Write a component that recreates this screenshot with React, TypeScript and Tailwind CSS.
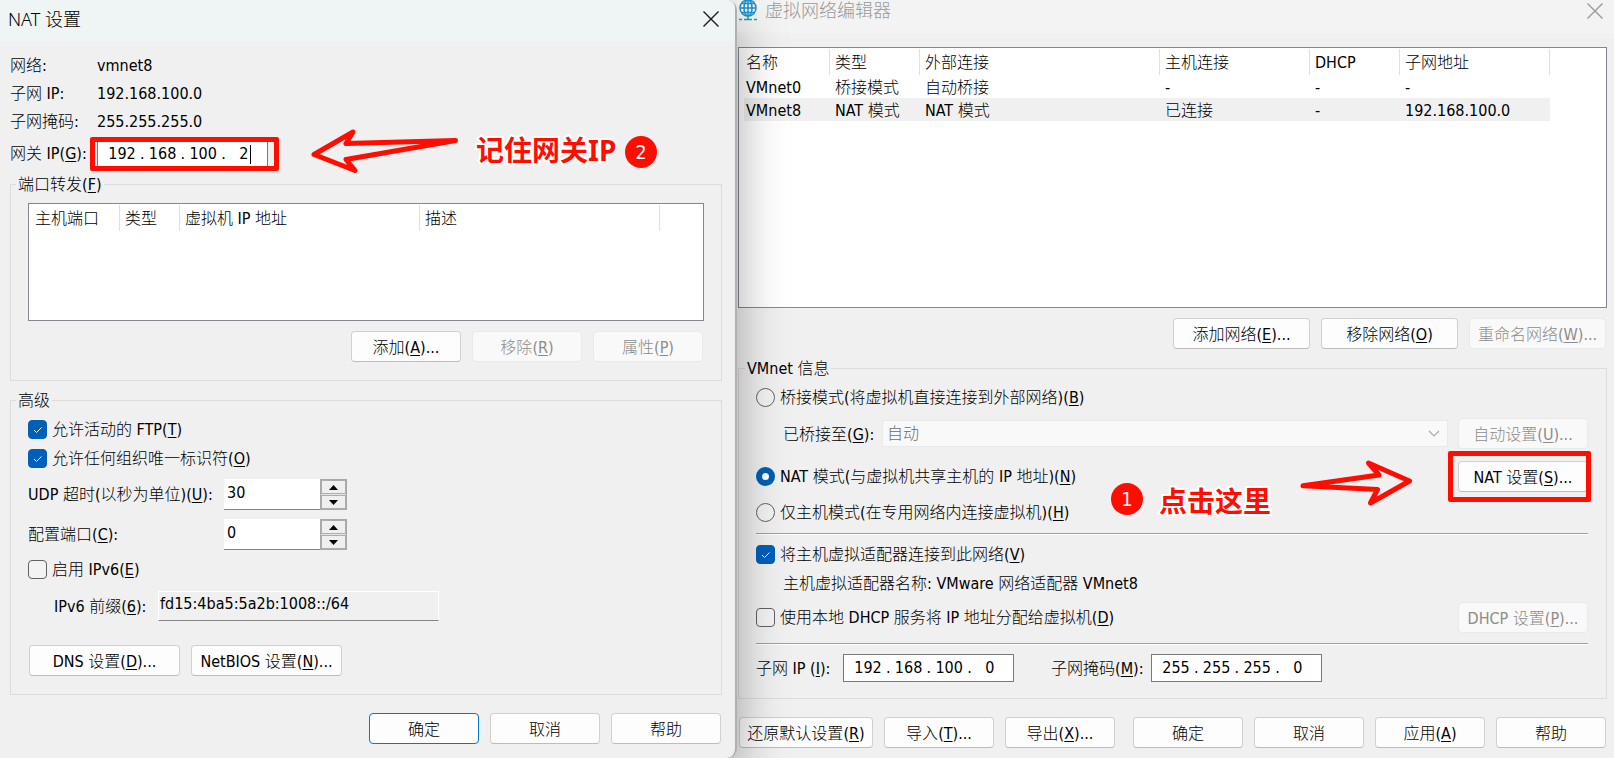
import React, { useState } from 'react';

const botonBase = 'flex h-[31px] shrink-0 items-center justify-center whitespace-nowrap rounded border pt-[2px]';
const botonNormal = 'border-[#d0d0d0] border-b-[#bcbcbc] bg-[#fdfdfd] text-black';
const botonDisabled = 'border-[#e9e9e9] bg-[#f9f9f9] text-[#8c8c8c]';

// Text with its keyboard shortcut: 添加(A)...
const Hotkey = ({ text, k, end = '' }: { text: string; k: string; end?: string }) => (
  <span className="whitespace-nowrap">
    {text}(<u className="underline underline-offset-2">{k}</u>){end}
  </span>
);

const Button = ({
  children,
  width = 'w-[110px]',
  disabled = false,
  primary = false,
}: {
  children: React.ReactNode;
  width?: string;
  disabled?: boolean;
  primary?: boolean;
}) => (
  <button
    type="button"
    disabled={disabled}
    className={`${botonBase} ${width} ${
      disabled ? botonDisabled : primary ? 'border-[#0078d4] bg-[#fdfdfd] text-black' : botonNormal
    }`}
  >
    {children}
  </button>
);

const Check = ({ checked = false, children }: { checked?: boolean; children: React.ReactNode }) => {
  const [on, setOn] = useState(checked);
  return (
    <label className="flex h-[29px] items-center gap-[5px]">
      <span className="relative h-[19px] w-[19px] shrink-0">
        <input
          type="checkbox"
          checked={on}
          onChange={() => setOn(!on)}
          className="block h-[19px] w-[19px] appearance-none rounded border border-[#626262] bg-[#f3f3f3] checked:border-[#005fb8] checked:bg-[#005fb8]"
        />
        {on && (
          <svg className="pointer-events-none absolute inset-0" width="19" height="19" viewBox="0 0 19 19" fill="none">
            <path d="M6 10l2.5 2.5L13.500 7.500" stroke="#fff" strokeWidth="1" />
          </svg>
        )}
      </span>
      <span className="pt-px">{children}</span>
    </label>
  );
};

const Radio = ({
  value,
  mode,
  setMode,
  children,
}: {
  value: string;
  mode: string;
  setMode: (v: string) => void;
  children: React.ReactNode;
}) => (
  <label className="flex h-[29px] items-center gap-[5px]">
    <input
      type="radio"
      name="vmnet"
      value={value}
      checked={mode === value}
      onChange={() => setMode(value)}
      className="h-[19px] w-[19px] shrink-0 appearance-none rounded-full border border-[#626262] bg-[#f3f3f3] checked:border-6 checked:border-[#005fb8] checked:bg-white"
    />
    <span className="pt-px">{children}</span>
  </label>
);

const IpField = ({ label, value, caret = false }: { label: string; value: string[]; caret?: boolean }) => (
  <div role="group" aria-label={label} className="flex h-7 w-[171px] items-center border border-[#7a7a7a] bg-white px-[6px]">
    {value.map((octet, i) => (
      <React.Fragment key={i}>
        {i > 0 && <span className="w-[6px] text-center">.</span>}
        <span className="relative flex">
          <input defaultValue={octet} aria-label={`${label} ${i + 1}`} className="w-9 bg-transparent text-center outline-none" />
          {caret && i === 3 && <span className="absolute right-[11px] top-[3px] h-[19px] w-px bg-black" />}
        </span>
      </React.Fragment>
    ))}
  </div>
);

const Spinner = ({ id, value }: { id: string; value: string }) => (
  <div className="flex h-[31px] w-[123px]">
    <input
      id={id}
      defaultValue={value}
      inputMode="numeric"
      className="w-24 border-b border-[#858585] bg-white pb-[3px] pl-[3px] outline-none"
    />
    <div className="flex flex-1 flex-col gap-px border border-[#a8a8a8] bg-[#e4e4e4]">
      <button type="button" aria-label="增加" className="flex flex-1 items-center justify-center border border-[#adadad] bg-[#efefef]">
        <svg width="9" height="5" viewBox="0 0 9 5"><path d="M0 5L4.500 0L9 5z" /></svg>
      </button>
      <button type="button" aria-label="减少" className="flex flex-1 items-center justify-center border border-[#adadad] bg-[#efefef]">
        <svg width="9" height="5" viewBox="0 0 9 5"><path d="M0 0L4.500 5L9 0z" /></svg>
      </button>
    </div>
  </div>
);

const CloseIcon = ({ color }: { color: string }) => (
  <svg width="16" height="16" viewBox="0 0 16 16" fill="none">
    <path d="M0.500 0.500L15.500 15.500M15.500 0.500L0.500 15.500" stroke={color} strokeWidth="1.400" />
  </svg>
);

const GlobeIcon = () => (
  <svg width="18" height="21" viewBox="0 0 18 21" fill="none">
    <g stroke="#1a93d0" strokeWidth="1.500">
      <circle cx="9" cy="8" r="8" />
      <ellipse cx="9" cy="8" rx="4" ry="8" />
      <path d="M9 0V16M1 8H17M2.500 3.500H15.500M2.500 12.500H15.500" />
    </g>
    <path d="M9 16V19M5 19.500H13M0 19.500H3M15 19.500H18" stroke="#1fa88c" strokeWidth="1.500" />
  </svg>
);

const Badge = ({ children, place }: { children: React.ReactNode; place: string }) => (
  <span className={`absolute flex h-8 w-8 items-center justify-center rounded-full bg-[#ff0d00] text-xl text-white ${place}`}>
    {children}
  </span>
);

const noteText =
  "absolute whitespace-nowrap font-['Noto_Sans','Noto_Sans_CJK_SC',sans-serif] text-[28px] leading-8 font-bold text-[#ff0d00] [paint-order:stroke_fill] [-webkit-text-stroke:4px_white]";

const vmnets = [
  ['VMnet0', '桥接模式', '自动桥接', '-', '-', '-'],
  ['VMnet8', 'NAT 模式', 'NAT 模式', '已连接', '-', '192.168.100.0'],
];

const thClass = 'h-[25px] border-r border-[#e0e0e0] pt-[2px] text-left font-light whitespace-nowrap';

const NatSettings = () => (
  <section className="relative z-10 flex flex-col rounded-r-[10px] border-r-2 border-[#b0b0b0] bg-[#f0f0f0] shadow-[0_24px_50px_rgba(0,0,0,0.35)]">
    <header className="flex h-[41px] items-center justify-between rounded-tr-lg bg-[#eff4f5] pr-4 pl-2">
      <h1 className="font-['Noto_Sans','Noto_Sans_CJK_SC',sans-serif] text-[18px] leading-6 pb-1">NAT 设置</h1>
      <button type="button" aria-label="关闭" className="pb-1">
        <CloseIcon color="#1a1a1a" />
      </button>
    </header>

    <div className="flex flex-col pt-[11px] pr-[13px] pb-[14px] pl-[10px]">
      <dl>
        <div className="flex h-7 items-center"><dt className="w-[87px]">网络:</dt><dd>vmnet8</dd></div>
        <div className="flex h-7 items-center"><dt className="w-[87px]">子网 IP:</dt><dd>192.168.100.0</dd></div>
        <div className="flex h-7 items-center"><dt className="w-[87px]">子网掩码:</dt><dd>255.255.255.0</dd></div>
      </dl>
      <div className="flex h-[35px] items-center">
        <span className="w-[87px] pt-px"><Hotkey text="网关 IP" k="G" end=":" /></span>
        <div className="relative">
          <IpField label="网关 IP" value={['192', '168', '100', '2']} caret />
          <span className="pointer-events-none absolute -inset-y-[3px] -right-[11px] -left-[7px] rounded-xs border-[5px] border-[#ff0d00]" />
        </div>
      </div>

      <fieldset className="mt-[3px] min-w-0 border border-[#dcdcdc] px-[17px] pt-[9px] pb-[18px]">
        <legend className="-ml-3 h-5 px-[2px] leading-[22px]"><Hotkey text="端口转发" k="F" /></legend>
        <div className="h-[118px] border border-[#828790] bg-white pt-px">
          <table className="border-separate border-spacing-0">
            <thead>
              <tr>
                <th className={`${thClass} w-[91px] pl-[6px]`}>主机端口</th>
                <th className={`${thClass} w-[60px] pl-[5px]`}>类型</th>
                <th className={`${thClass} w-[240px] pl-[5px]`}>虚拟机 IP 地址</th>
                <th className={`${thClass} w-[240px] pl-[5px]`}>描述</th>
              </tr>
            </thead>
          </table>
        </div>
        <div className="mt-[10px] flex justify-end gap-[11px] pr-px">
          <Button><Hotkey text="添加" k="A" end="..." /></Button>
          <Button disabled><Hotkey text="移除" k="R" /></Button>
          <Button disabled><Hotkey text="属性" k="P" /></Button>
        </div>
      </fieldset>

      <fieldset className="mt-[9px] min-w-0 border border-[#dcdcdc] px-[17px] pt-[5px] pb-[18px]">
        <legend className="-ml-3 h-5 px-[2px] leading-[22px]">高级</legend>
        <Check checked><Hotkey text="允许活动的 FTP" k="T" /></Check>
        <Check checked><Hotkey text="允许任何组织唯一标识符" k="O" /></Check>
        <div className="mt-[6px] flex items-center">
          <label htmlFor="udp" className="w-[196px] pt-px"><Hotkey text="UDP 超时(以秒为单位)" k="U" end=":" /></label>
          <Spinner id="udp" value="30" />
        </div>
        <div className="mt-[9px] mb-[5px] flex items-center">
          <label htmlFor="puerto" className="w-[196px] pt-px"><Hotkey text="配置端口" k="C" end=":" /></label>
          <Spinner id="puerto" value="0" />
        </div>
        <Check><Hotkey text="启用 IPv6" k="E" /></Check>
        <div className="mt-[7px] flex items-center pl-[26px]">
          <label htmlFor="ipv6" className="w-[104px] pt-px"><Hotkey text="IPv6 前缀" k="6" end=":" /></label>
          <input
            id="ipv6"
            readOnly
            value="fd15:4ba5:5a2b:1008::/64"
            className="h-[30px] w-[281px] border border-white border-b-[#858585] bg-transparent pb-[5px] pl-px outline-none"
          />
        </div>
        <div className="mt-6 flex gap-[11px] pl-px">
          <Button width="w-[151px]"><Hotkey text="DNS 设置" k="D" end="..." /></Button>
          <Button width="w-[151px]"><Hotkey text="NetBIOS 设置" k="N" end="..." /></Button>
        </div>
      </fieldset>

      <div className="mt-[18px] flex justify-end gap-[11px] pr-px">
        <Button primary>确定</Button>
        <Button>取消</Button>
        <Button>帮助</Button>
      </div>
    </div>

    {/* step 2 */}
    <svg className="pointer-events-none absolute top-[126px] left-[308px]" width="154" height="50" viewBox="308 126 154 50" fill="none">
      <path
        d="M314 154.500L353 132L346 143.500L455.500 140.500L346 159.500L355 170.500Z"
        stroke="#ff0d00"
        strokeWidth="5"
        strokeLinejoin="round"
      />
    </svg>
    <span className={`${noteText} top-[134px] left-[476px]`}>记住网关IP</span>
    <Badge place="top-[136px] left-[625px]">2</Badge>
  </section>
);

const NetworkEditor = () => {
  const [mode, setMode] = useState('nat');

  return (
    <section className="relative flex min-w-0 flex-col bg-[#f0f0f0]">
      <header className="flex h-[33px] items-start justify-between bg-[#f3f3f3] pr-[11px] pl-[2px]">
        <div className="flex gap-2">
          <GlobeIcon />
          <h1 className="text-lg leading-[22px] text-[#999]">虚拟网络编辑器</h1>
        </div>
        <button type="button" aria-label="关闭" className="pt-[3px]">
          <CloseIcon color="#999" />
        </button>
      </header>

      <div className="flex flex-col pt-[14px] pr-[7px] pb-[10px] pl-px">
        <div className="h-[261px] border border-[#828790] bg-white pt-px">
          <table className="ml-[5px] border-separate border-spacing-0">
            <thead>
              <tr>
                <th className={`${thClass} w-[86px] pl-[2px]`}>名称</th>
                <th className={`${thClass} w-[90px] pl-[5px]`}>类型</th>
                <th className={`${thClass} w-[240px] pl-[5px]`}>外部连接</th>
                <th className={`${thClass} w-[150px] pl-[5px]`}>主机连接</th>
                <th className={`${thClass} w-[90px] pl-[5px]`}>DHCP</th>
                <th className={`${thClass} w-[150px] pl-[5px]`}>子网地址</th>
              </tr>
            </thead>
            <tbody>
              {vmnets.map((row, i) => (
                <tr key={row[0]} className={i === 1 ? 'bg-[#f0f0f0]' : ''}>
                  {row.map((cell, j) => (
                    <td key={j} className={`h-[23px] pt-[2px] leading-5 whitespace-nowrap ${j === 0 ? 'pl-[2px]' : 'pl-[5px]'}`}>
                      {cell}
                    </td>
                  ))}
                </tr>
              ))}
            </tbody>
          </table>
        </div>

        <div className="mt-[10px] flex justify-end gap-[11px] pr-px">
          <Button width="w-[137px]"><Hotkey text="添加网络" k="E" end="..." /></Button>
          <Button width="w-[137px]"><Hotkey text="移除网络" k="O" /></Button>
          <Button width="w-[137px]" disabled><Hotkey text="重命名网络" k="W" end="..." /></Button>
        </div>

        <fieldset className="mt-[9px] min-w-0 border border-[#dcdcdc] pt-[5px] pr-[18px] pb-4 pl-[17px]">
          <legend className="-ml-[11px] h-5 px-[2px] leading-[22px]">VMnet 信息</legend>
          <Radio value="bridge" mode={mode} setMode={setMode}>
            <Hotkey text="桥接模式(将虚拟机直接连接到外部网络)" k="B" />
          </Radio>
          <div className="mt-[6px] flex items-center pl-[27px]">
            <label htmlFor="adapter" className="w-[99px] shrink-0 pt-[2px]"><Hotkey text="已桥接至" k="G" end=":" /></label>
            <div className="relative mr-[10px] flex-1">
              <select
                id="adapter"
                disabled
                className="block h-[27px] w-full appearance-none border border-[#e9e9e9] bg-[#f9f9f9] pt-px pl-1 text-[#6d6d6d] opacity-100"
              >
                <option>自动</option>
              </select>
              <svg className="pointer-events-none absolute top-[10px] right-2" width="12" height="7" viewBox="0 0 12 7" fill="none">
                <path d="M1 1L6 6L11 1" stroke="#a8a8a8" strokeWidth="1.200" />
              </svg>
            </div>
            <Button width="w-[130px]" disabled><Hotkey text="自动设置" k="U" end="..." /></Button>
          </div>
          <div className="mt-3 mb-[6px] flex items-center justify-between">
            <Radio value="nat" mode={mode} setMode={setMode}>
              <Hotkey text="NAT 模式(与虚拟机共享主机的 IP 地址)" k="N" />
            </Radio>
            <div className="relative">
              <Button width="w-[130px]"><Hotkey text="NAT 设置" k="S" end="..." /></Button>
              <span className="pointer-events-none absolute -top-[10px] -right-[3px] -bottom-[10px] -left-[10px] rounded-xs border-[5px] border-[#ff0d00]" />
            </div>
          </div>
          <Radio value="host" mode={mode} setMode={setMode}>
            <Hotkey text="仅主机模式(在专用网络内连接虚拟机)" k="H" />
          </Radio>
          <hr className="mt-[6px] mb-[5px] h-[2px] border-t border-b border-t-[#a0a0a0] border-b-white" />
          <Check checked><Hotkey text="将主机虚拟适配器连接到此网络" k="V" /></Check>
          <p className="flex h-7 items-center pt-px pl-[27px]">主机虚拟适配器名称: VMware 网络适配器 VMnet8</p>
          <div className="mt-[5px] flex items-center justify-between">
            <Check><Hotkey text="使用本地 DHCP 服务将 IP 地址分配给虚拟机" k="D" /></Check>
            <Button width="w-[130px]" disabled><Hotkey text="DHCP 设置" k="P" end="..." /></Button>
          </div>
          <hr className="mt-[10px] mb-[9px] h-[2px] border-t border-b border-t-[#a0a0a0] border-b-white" />
          <div className="flex items-center">
            <span className="w-[87px] pt-px"><Hotkey text="子网 IP " k="I" end=":" /></span>
            <IpField label="子网 IP" value={['192', '168', '100', '0']} />
            <span className="ml-[37px] w-[100px] pt-px"><Hotkey text="子网掩码" k="M" end=":" /></span>
            <IpField label="子网掩码" value={['255', '255', '255', '0']} />
          </div>
        </fieldset>

        <div className="mt-[18px] flex justify-between px-px">
          <div className="flex gap-[11px]">
            <Button width="w-[134px]"><Hotkey text="还原默认设置" k="R" /></Button>
            <Button><Hotkey text="导入" k="T" end="..." /></Button>
            <Button><Hotkey text="导出" k="X" end="..." /></Button>
          </div>
          <div className="flex gap-[11px]">
            <Button>确定</Button>
            <Button>取消</Button>
            <Button><Hotkey text="应用" k="A" /></Button>
            <Button>帮助</Button>
          </div>
        </div>
      </div>

      {/* step 1 */}
      <Badge place="top-[483px] right-[471px]">1</Badge>
      <span className={`${noteText} top-[485px] right-[343px]`}>点击这里</span>
      <svg className="pointer-events-none absolute top-[456px] right-[198px]" width="120" height="54" viewBox="1296 456 120 54" fill="none">
        <path
          d="M1303 485.700L1379 475L1368.500 463L1409.500 481L1370.500 503L1377.500 489.500Z"
          stroke="#ff0d00"
          strokeWidth="5"
          strokeLinejoin="round"
        />
      </svg>
    </section>
  );
};

const App = () => {
  return (
    <main className="grid min-h-screen grid-cols-[737fr_877fr] overflow-hidden bg-[#f0f0f0] font-['DejaVu_Sans_Condensed','Noto_Sans_CJK_SC',sans-serif] text-base leading-6 font-light text-black">
      <NatSettings />
      <NetworkEditor />
    </main>
  );
};

export default App;
